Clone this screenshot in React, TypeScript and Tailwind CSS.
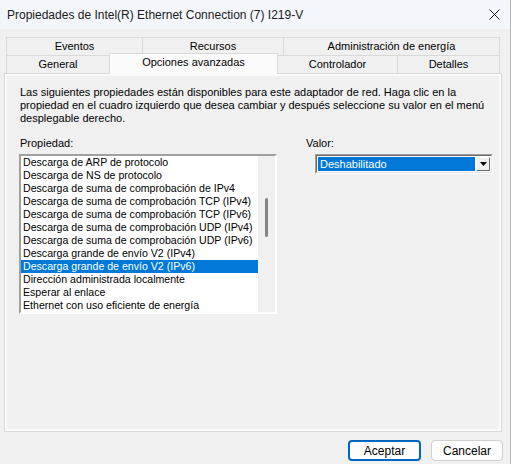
import React from "react";

const items = [
  "Descarga de ARP de protocolo",
  "Descarga de NS de protocolo",
  "Descarga de suma de comprobación de IPv4",
  "Descarga de suma de comprobación TCP (IPv4)",
  "Descarga de suma de comprobación TCP (IPv6)",
  "Descarga de suma de comprobación UDP (IPv4)",
  "Descarga de suma de comprobación UDP (IPv6)",
  "Descarga grande de envío V2 (IPv4)",
  "Descarga grande de envío V2 (IPv6)",
  "Dirección administrada localmente",
  "Esperar al enlace",
  "Ethernet con uso eficiente de energía",
];

export default function App() {
  return (
    <div
      className="w-[511px] h-[464px] bg-[#f0f0f0] border-r border-[#b4b4b4] flex flex-col text-black overflow-hidden"
      style={{ fontFamily: '"Liberation Sans", Arial, sans-serif' }}
    >
      {/* Title bar */}
      <div className="h-[29px] bg-[#f3f6fa] flex items-center justify-between pl-[7px] pr-[10px] shrink-0">
        <span className="text-[12px] leading-none text-[#1b1b1b]">
          Propiedades de Intel(R) Ethernet Connection (7) I219-V
        </span>
        <svg width="11" height="11" viewBox="0 0 11 11">
          <path d="M0.5 0.5 L10.5 10.5 M10.5 0.5 L0.5 10.5" stroke="#1b1b1b" strokeWidth="1" fill="none" />
        </svg>
      </div>

      {/* Tabs */}
      <div className="mt-[8px] ml-[6px] w-[494px] flex flex-col text-[11px] leading-none">
        <div className="flex h-[18px]">
          <div className="w-[136px] border-t border-l border-[#d9d9d9] bg-[#f0f0f0] flex items-center justify-center">Eventos</div>
          <div className="w-[141px] border-t border-l border-[#d9d9d9] bg-[#f0f0f0] flex items-center justify-center">Recursos</div>
          <div className="w-[217px] border-t border-l border-r border-[#d9d9d9] bg-[#f0f0f0] flex items-center justify-center">Administración de energía</div>
        </div>
        <div className="flex h-[18px] items-end">
          <div className="w-[103px] h-[18px] border-t border-l border-[#d9d9d9] bg-[#f0f0f0] flex items-center justify-center">General</div>
          <div className="w-[169px] h-[21px] -mb-[1px] relative z-10 border-t border-l border-r border-[#d9d9d9] bg-[#fbfbfb] flex items-center justify-center pb-[3px]">Opciones avanzadas</div>
          <div className="w-[119px] h-[18px] border-t border-[#d9d9d9] bg-[#f0f0f0] flex items-center justify-center">Controlador</div>
          <div className="w-[103px] h-[18px] border-t border-l border-r border-[#d9d9d9] bg-[#f0f0f0] flex items-center justify-center">Detalles</div>
        </div>
      </div>

      {/* Panel */}
      <div className="ml-[4px] w-[498px] h-[359px] border border-[#d9d9d9] shrink-0">
        <div className="w-full h-full border-2 border-[#fbfbfb] bg-[#f0f0f0] pl-[13px] pt-[10px] text-[11px] leading-[13px]">
          <p className="whitespace-nowrap">
            Las siguientes propiedades están disponibles para este adaptador de red. Haga clic en la
            <br />
            propiedad en el cuadro izquierdo que desea cambiar y después seleccione su valor en el menú
            <br />
            desplegable derecho.
          </p>

          <div className="flex mt-[12px]">
            {/* Left column */}
            <div className="flex flex-col w-[258px]">
              <div className="h-[13px]">Propiedad:</div>
              <div className="mt-[4px] -ml-[1px] w-[258px] h-[160px] border-t-2 border-l-2 border-t-[#a0a0a0] border-l-[#a0a0a0] border-b-2 border-r-2 border-b-white border-r-white flex">
                <div className="w-[237px] bg-white flex flex-col overflow-hidden text-[10.6px]">
                  {items.map((it, i) => (
                    <div
                      key={i}
                      className={
                        i === 8
                          ? "h-[13px] pl-[2px] bg-[#0078d7] text-white whitespace-nowrap"
                          : "h-[13px] pl-[2px] whitespace-nowrap"
                      }
                    >
                      {it}
                    </div>
                  ))}
                </div>
                <div className="flex-1 bg-[#f0f0f0] flex justify-center pt-[42px]">
                  <div className="w-[3px] h-[39px] rounded-full bg-[#858585]" />
                </div>
              </div>
            </div>

            {/* Right column */}
            <div className="flex flex-col ml-[28px]">
              <div className="h-[13px]">Valor:</div>
              <div className="mt-[4px] ml-[9px] w-[178px] h-[20px] border-t border-l border-t-[#a0a0a0] border-l-[#a0a0a0] border-b border-r border-b-white border-r-white">
                <div className="w-full h-full border-t border-l border-t-[#696969] border-l-[#696969] border-b border-r border-b-[#e3e3e3] border-r-[#e3e3e3] bg-white flex p-[1px]">
                  <div className="w-[157px] bg-[#0078d7] text-white pl-[2px] flex items-center">Deshabilitado</div>
                  <div className="flex-1 ml-[1px] bg-[#f0f0f0] border-t border-l border-white border-b border-r border-b-[#696969] border-r-[#696969] flex items-center justify-center">
                    <svg width="7" height="4" viewBox="0 0 7 4">
                      <path d="M0 0 H7 L3.5 4 Z" fill="#000" />
                    </svg>
                  </div>
                </div>
              </div>
            </div>
          </div>
        </div>
      </div>

      {/* Buttons */}
      <div className="flex justify-end gap-[10px] mt-[8px] pr-[7px]">
        <button className="w-[73px] h-[21px] rounded-[4px] border-2 border-[#0067c0] bg-[#fdfdfd] text-[12px] leading-none">
          Aceptar
        </button>
        <button className="w-[72px] h-[21px] rounded-[4px] border border-[#d0d0d0] bg-[#fdfdfd] text-[12px] leading-none">
          Cancelar
        </button>
      </div>
    </div>
  );
}
